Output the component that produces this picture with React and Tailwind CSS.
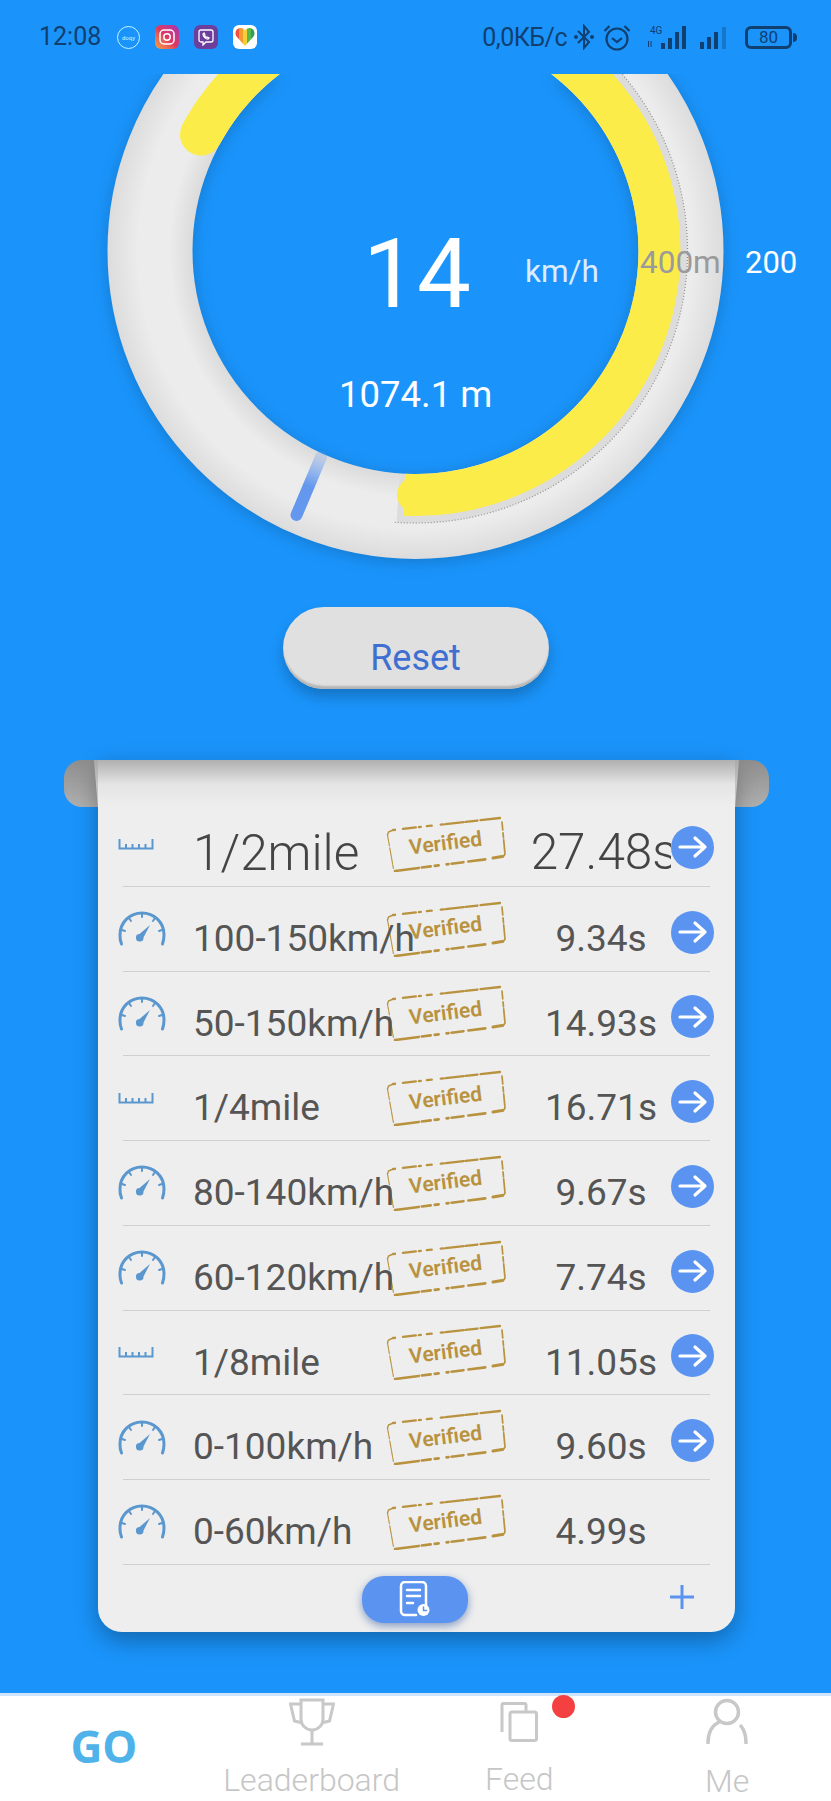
import React from 'react';

const rows = [
  { name: '1/2mile', time: '27.48s', kind: 'ruler', big: true, arrow: true },
  { name: '100-150km/h', time: '9.34s', kind: 'gauge', arrow: true },
  { name: '50-150km/h', time: '14.93s', kind: 'gauge', arrow: true },
  { name: '1/4mile', time: '16.71s', kind: 'ruler', arrow: true },
  { name: '80-140km/h', time: '9.67s', kind: 'gauge', arrow: true },
  { name: '60-120km/h', time: '7.74s', kind: 'gauge', arrow: true },
  { name: '1/8mile', time: '11.05s', kind: 'ruler', arrow: true },
  { name: '0-100km/h', time: '9.60s', kind: 'gauge', arrow: true },
  { name: '0-60km/h', time: '4.99s', kind: 'gauge', arrow: false },
];

const RulerIcon = () => (
  <svg width="36" height="12" viewBox="0 0 36 12" fill="none" stroke="#5b97cf" strokeWidth="2">
    <path d="M1.5 1v9.500h33V1M8 6v4M14.500 6v4M21 6v4M27.500 6v4" />
  </svg>
);

const GaugeIcon = () => (
  <svg width="48" height="35" viewBox="0 0 48 35" fill="none" stroke="#5b97cf" strokeWidth="3" strokeLinecap="round">
    <path d="M3.500 33a21.500 21.500 0 0 1-1.500-9C2 11 12 2 24 2s22 9 22 22c0 3-.5 6-1.500 9" />
    <path strokeWidth="2" d="M24 3v3M11 7l2 3M37 7l-2 3M4 19l3 1M44 19l-3 1" />
    <path fill="#5b97cf" stroke="none" d="M32 14 25.500 26.500a3.800 3.800 0 1 1-4-3.500z" />
  </svg>
);

const ArrowCircle = () => (
  <div className="w-[43px] h-[43px] rounded-full bg-[#5b94f0] flex items-center justify-center">
    <svg width="30" height="24" viewBox="0 0 30 24" fill="none" stroke="#fff" strokeWidth="3.200" strokeLinecap="round" strokeLinejoin="round">
      <path d="M2 12h25M17 3l10 9-10 9" />
    </svg>
  </div>
);

const Stamp = () => (
  <div className="relative -ml-[2px] mr-[2px] w-[122px] h-[56px] shrink-0 flex items-center justify-center">
    <svg className="absolute inset-0" width="122" height="56" viewBox="0 0 122 56" fill="none" stroke="#b8923e" strokeLinecap="round">
      <path strokeWidth="2.300" strokeDasharray="2 8 13 3 2 6 5 9 3 2 18 2 12 3 24 2" d="M8 14 115 2" />
      <path strokeWidth="2.600" strokeDasharray="24 3 9 4 4 8 2 3 12 5 17 8 14" d="M10 55 103 43" />
      <path strokeWidth="3" d="M108 42l9-1.500" />
      <path strokeWidth="1.100" strokeDasharray="6 1 4 2 9 1" d="M2.500 19l6 34" />
      <path strokeWidth="1.700" strokeDasharray="8 3 5 2 12 1" d="M117 6l3 32-2 3" />
      <path strokeWidth="1.400" d="M7 14.500 3.500 16 2.500 19" />
    </svg>
    <span className="relative -rotate-[7deg] font-['Roboto',sans-serif] font-semibold text-[21px] leading-none text-[#b8923e]">Verified</span>
  </div>
);

const Row = ({ row }) => (
  <div className="h-[84.75px] mx-[25px] border-b border-[#cfcfcf] flex items-center">
    <div className="w-[75px] -ml-[5px] shrink-0 flex items-center">
      {row.kind === 'ruler' ? <RulerIcon /> : <GaugeIcon />}
    </div>
    <div className={`w-[194px] shrink-0 whitespace-nowrap relative z-10 ${row.big ? 'pt-[19px] text-[49.500px] font-light text-[#444]' : 'pt-[20px] text-[37px] text-[#555]'}`}>
      {row.name}
    </div>
    <Stamp />
    <div className={`w-[140px] ml-[22px] shrink-0 overflow-hidden whitespace-nowrap flex justify-center ${row.big ? 'pl-[6px] pt-[17px] text-[49.500px] font-light text-[#444]' : 'pt-[20px] text-[37px] text-[#555]'}`}>
      {row.time}
    </div>
    <div className="w-[43px] -mr-[4px] shrink-0 pt-[7px]">{row.arrow && <ArrowCircle />}</div>
  </div>
);

const StatusBar = () => (
  <div className="h-[74px] shrink-0 flex items-center justify-between pl-[39px] pr-[34px] text-[#103f70]">
    <div className="flex items-center">
      <span className="text-[25px] w-[78px]">12:08</span>
      <div className="flex items-center gap-[15px]">
        <div className="w-[23px] h-[23px] rounded-full border-[1.500px] border-[#c8f4ff] flex items-center justify-center text-[6px] text-[#c8f4ff]">doqy</div>
        <div className="w-[24px] h-[24px] rounded-[6px] bg-gradient-to-tr from-[#f6a03a] via-[#e0355f] to-[#a52fb0] flex items-center justify-center">
          <svg width="16" height="16" viewBox="0 0 16 16" fill="none" stroke="#fff" strokeWidth="1.500">
            <rect x="1" y="1" width="14" height="14" rx="4" />
            <circle cx="8" cy="8" r="3.200" />
          </svg>
        </div>
        <div className="w-[24px] h-[24px] rounded-[6px] bg-[#6d3f9c] flex items-center justify-center">
          <svg width="16" height="17" viewBox="0 0 16 17" fill="none" stroke="#fff" strokeWidth="1.300">
            <path d="M3 1h10a2 2 0 0 1 2 2v8a2 2 0 0 1-2 2H8l-3 3v-3H3a2 2 0 0 1-2-2V3a2 2 0 0 1 2-2z" />
            <path d="M5 5c0 3 3 5 5 5l1-1-2-1-1 .5L6.500 7 7 6 6 4z" />
          </svg>
        </div>
        <div className="w-[24px] h-[24px] rounded-[6px] bg-white flex items-center justify-center">
          <svg width="20" height="20" viewBox="0 0 20 20" fill="none" strokeWidth="4">
            <clipPath id="heartClip">
              <path d="M10 19 1.500 9.500C-1 5.500 1.500 1 5.500 1 7.500 1 9 2 10 3.500 11 2 12.500 1 14.500 1c4 0 6.500 4.500 4 8.500z" />
            </clipPath>
            <g clipPath="url(#heartClip)">
              <path stroke="#f0503c" d="M2 0v20" />
              <path stroke="#f59a2f" d="M6 0v20" />
              <path stroke="#f3cf3a" d="M10 0v20" />
              <path stroke="#58b84c" d="M14 0v20" />
              <path stroke="#2f9e57" d="M18 0v20" />
            </g>
          </svg>
        </div>
      </div>
    </div>
    <div className="flex items-center">
      <span className="text-[25px] leading-none tracking-[-0.5px]">0,0КБ/с</span>
      <svg className="ml-[7px]" width="20" height="26" viewBox="0 0 20 26" fill="none" stroke="#103f70" strokeWidth="2">
        <path d="M4 7l11 11-5 6V2l5 6L4 19" />
        <circle cx="2" cy="13" r="1" fill="#103f70" />
        <circle cx="18" cy="13" r="1" fill="#103f70" />
      </svg>
      <svg className="ml-[9px]" width="28" height="27" viewBox="0 0 28 27" fill="none" stroke="#103f70" strokeWidth="2.200">
        <circle cx="14" cy="15" r="10.500" />
        <path d="M9 14l5 4 5-4M1.500 7l5-5M26.500 7l-5-5" />
      </svg>
      <svg className="ml-[16px]" width="44" height="25" viewBox="0 0 44 25" fill="#103f70">
        <text x="3" y="9" fontSize="10" fontFamily="Roboto, sans-serif">4G</text>
        <path d="M1 16h1v6H1zM3.500 16h1v6h-1z" />
        <path d="M14 18h4v6h-4zM21 13h4v11h-4zM28 7h4v17h-4zM35 1h4v23h-4z" />
      </svg>
      <svg className="ml-[8px]" width="32" height="23" viewBox="0 0 32 23" fill="#103f70">
        <path d="M1 16h4v7H1zM8 11h4v12H8zM15 6h4v17h-4z" />
        <path fillOpacity="0.35" d="M23 1h4v22h-4z" />
      </svg>
      <div className="ml-[14px] flex items-center">
        <div className="w-[47px] h-[23px] rounded-[6px] border-[3px] border-[#103f70] flex items-center justify-center text-[17px] leading-none">80</div>
        <div className="w-[4px] h-[9px] ml-[1px] rounded-r-sm bg-[#103f70]" />
      </div>
    </div>
  </div>
);

const Ring = () => (
  <svg className="absolute inset-0 drop-shadow-[0_3px_8px_rgba(0,0,0,0.18)]" width="831" height="533" viewBox="0 74 831 533" fill="none">
    <defs>
      <radialGradient id="ringFill" gradientUnits="userSpaceOnUse" cx="415.500" cy="251" r="308">
        <stop offset="0.72" stopColor="#dadada" />
        <stop offset="0.8" stopColor="#ececec" />
        <stop offset="0.9" stopColor="#ececec" />
        <stop offset="1" stopColor="#dcdcdc" />
      </radialGradient>
      <linearGradient id="needleFill" gradientUnits="userSpaceOnUse" x1="321" y1="457" x2="309" y2="486">
        <stop offset="0" stopColor="#6498ee" stopOpacity="0.25" />
        <stop offset="1" stopColor="#6498ee" />
      </linearGradient>
    </defs>
    <circle cx="415.500" cy="251" r="265.500" stroke="url(#ringFill)" strokeWidth="85" />
    {/* grey track under the yellow distance arc */}
    <path d="M 557.700 47.800 A 248 248 0 0 1 398.200 498.400" stroke="#dcdcdc" strokeWidth="48" />
    <path d="M 571.500 28.200 A 272 272 0 0 1 394.200 522.200" stroke="#8f8f8f" strokeWidth="1.200" strokeDasharray="1 2" />
    <path d="M 201 134.600 A 244 244 0 1 1 404 494.700" stroke="#fcec4a" strokeWidth="42" />
    <path d="M 201 134.600 A 244 244 0 0 1 215.600 111" stroke="#fcec4a" strokeWidth="42" strokeLinecap="round" />
    <path d="M 425 494.800 L 414 494.800" stroke="#fcec4a" strokeWidth="34" strokeLinecap="round" />
    <path d="M 321 457 L 296.500 515" stroke="url(#needleFill)" strokeWidth="12" strokeLinecap="round" />
  </svg>
);

const TrophyIcon = () => (
  <svg width="46" height="48" viewBox="0 0 46 48" fill="none" stroke="#c8c8c8" strokeWidth="3">
    <path d="M12 2h22v19a11 11 0 0 1-22 0z" />
    <path d="M12 6H1.500l4 17 8 2M34 6h10.500l-4 17-8 2M23 32v13M12 46h22" />
  </svg>
);

const FeedIcon = () => (
  <svg width="38" height="40" viewBox="0 0 38 40" fill="none" stroke="#c8c8c8" strokeWidth="3" strokeLinejoin="round">
    <path d="M2 30V3a1.500 1.500 0 0 1 1.500-1.500h21a1.500 1.500 0 0 1 1.500 1.500v6" />
    <rect x="10" y="10" width="26.500" height="28.500" rx="2" />
  </svg>
);

const PersonIcon = () => (
  <svg width="42" height="46" viewBox="0 0 42 46" fill="none" stroke="#c8c8c8" strokeWidth="3.500" strokeLinecap="round">
    <circle cx="21" cy="14" r="11.500" />
    <path d="M2 45c0-9 3-17 11-21M40 45c0-6-1-12-5-17" />
  </svg>
);

const Nav = () => (
  <div className="mt-auto h-[108px] shrink-0 bg-white border-t-[3px] border-[#cfe4fa] grid grid-cols-4 font-['Roboto',sans-serif] font-light text-[32px] leading-none text-[#c6c6c6]">
    <div className="flex items-center justify-center pb-[6px]">
      <span className="font-['Open_Sans',sans-serif] font-bold text-[44px] text-[#4fb3ea]">GO</span>
    </div>
    <div className="flex flex-col items-center pt-[2px]">
      <TrophyIcon />
      <span className="mt-[18px] whitespace-nowrap">Leaderboard</span>
    </div>
    <div className="flex flex-col items-center pt-[6px]">
      <div className="relative">
        <FeedIcon />
        <div className="absolute -top-[7px] left-[52px] w-[23px] h-[23px] rounded-full bg-[#f44040]" />
      </div>
      <span className="mt-[21px]">Feed</span>
    </div>
    <div className="flex flex-col items-center pt-[2px]">
      <PersonIcon />
      <span className="mt-[21px]">Me</span>
    </div>
  </div>
);

export default function App() {
  return (
    <div className="w-[831px] h-[1801px] bg-[#1a94fb] flex flex-col overflow-hidden font-['Roboto',sans-serif]">
      <StatusBar />

      <div className="relative h-[533px] shrink-0 overflow-hidden">
        <Ring />
        <span className="absolute left-[363px] top-[143px] text-[96px] leading-[1.2] text-white">14</span>
        <span className="absolute left-[525px] top-[182px] text-[31.500px] leading-none text-[#dcecff]">km/h</span>
        <span className="absolute left-[339px] top-[303px] text-[36.500px] leading-none text-white">1074.1 m</span>
        <span className="absolute left-[640px] top-[173px] text-[31.500px] leading-none text-[#9a9a9a]">400m</span>
        <span className="absolute left-[745px] top-[173px] text-[31px] leading-none text-white">200</span>
      </div>

      <div className="flex justify-center shrink-0">
        <button className="w-[266px] h-[82px] pt-[20px] rounded-[41px] bg-[#e0e0e0] text-[36px] leading-none text-[#3f6fd0] shadow-[inset_0_-4px_2px_-1px_#b5b5b5,0_8px_14px_rgba(0,0,0,0.22)]">
          Reset
        </button>
      </div>

      <div className="relative shrink-0 mt-[71px] ml-[64px] w-[705px] h-[872px]">
        {/* paper roll ends behind the sheet */}
        <div className="absolute left-0 top-0 w-[50px] h-[47px] rounded-l-[18px] bg-gradient-to-b from-[#8e8e8e] to-[#b0b0b0]" />
        <div className="absolute right-0 top-0 w-[50px] h-[47px] rounded-r-[18px] bg-gradient-to-b from-[#8e8e8e] to-[#b0b0b0]" />
        <div className="absolute left-[30px] right-[30px] top-0 h-[47px] bg-gradient-to-b from-[#b0b0b0] via-[#e4e4e4] via-[24px] to-[#eeeeee] [clip-path:polygon(0_0,100%_0,99.4%_100%,0.6%_100%)]" />

        <div className="relative mx-[34px] h-[872px] rounded-b-[24px] shadow-[0_8px_24px_rgba(0,0,0,0.32)] bg-gradient-to-b from-[#b0b0b0] via-[#e4e4e4] via-[24px] to-[#eeeeee] to-[47px]">
          <div className="pt-[42px]">
            {rows.map((row) => (
              <Row key={row.name} row={row} />
            ))}
          </div>
          <div className="relative h-[67px] flex justify-center pt-[11px]">
            <div className="w-[106px] h-[47px] rounded-[22px] bg-[#5b94f0] shadow-[0_3px_8px_rgba(60,100,170,0.6)] flex items-center justify-center ml-[-3px]">
              <svg width="32" height="36" viewBox="0 0 32 36" fill="none" stroke="#fff" strokeWidth="2.500" strokeLinecap="round">
                <path d="M17 34H6a4 4 0 0 1-4-4V5a4 4 0 0 1 4-4h17a4 4 0 0 1 4 4v19" />
                <path d="M8 9h13M8 15h13M8 22h6" />
                <circle cx="24.500" cy="29" r="6" fill="#fff" stroke="none" />
                <path stroke="#5b94f0" strokeWidth="1.500" d="M24.500 26v3.500h3" />
              </svg>
            </div>
            <div className="absolute right-[41px] top-[20px] text-[#5b94f0]">
              <svg width="24" height="24" viewBox="0 0 24 24" stroke="currentColor" strokeWidth="3">
                <path d="M0 12h24M12 0v24" />
              </svg>
            </div>
          </div>
        </div>
      </div>

      <Nav />
    </div>
  );
}
